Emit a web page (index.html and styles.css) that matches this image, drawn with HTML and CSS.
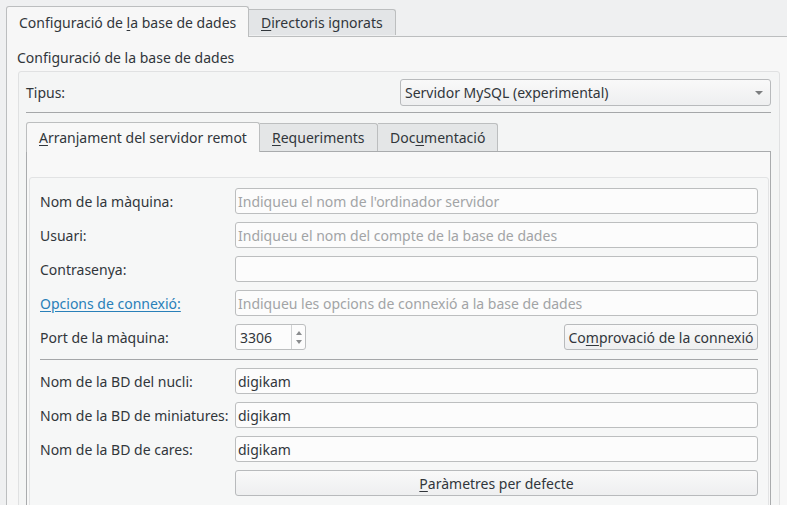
FILE: index.html
```html
<!DOCTYPE html>
<html lang="ca">
<head>
<meta charset="utf-8">
<title>Configuració de la base de dades</title>
<link rel="stylesheet" href="styles.css">
</head>
<body>
<div class="outer">
  <div class="tabbar">
    <div class="tab active"><span>Configuració de <u>l</u>a base de dades</span></div>
    <div class="tab inactive"><span><u>D</u>irectoris ignorats</span></div>
  </div>
  <div class="pane">
    <div class="title">Configuració de la base de dades</div>
    <div class="group">
      <div class="type-row">
        <span>Tipus:</span>
        <div class="combo">
          <span>Servidor MySQL (experimental)</span>
          <span class="arrow"></span>
        </div>
      </div>
      <div class="hline"></div>
      <div class="inner-tabbar">
        <div class="itab active"><span><u>A</u>rranjament del servidor remot</span></div>
        <div class="itab inactive"><span><u>R</u>equeriments</span></div>
        <div class="itab inactive"><span>Doc<u>u</u>mentació</span></div>
      </div>
      <div class="inner-pane">
        <div class="frame">
          <div class="form">
            <label>Nom de la màquina:</label>
            <div class="input placeholder">Indiqueu el nom de l'ordinador servidor</div>
            <label>Usuari:</label>
            <div class="input placeholder">Indiqueu el nom del compte de la base de dades</div>
            <label>Contrasenya:</label>
            <div class="input"></div>
            <label><a class="link">Opcions de connexió:</a></label>
            <div class="input placeholder">Indiqueu les opcions de connexió a la base de dades</div>
            <label>Port de la màquina:</label>
            <div class="port-row">
              <div class="spin">
                <span class="spin-val">3306</span>
                <span class="spin-btns"><span class="up"></span><span class="down"></span></span>
              </div>
              <div class="button test"><span>Co<u>m</u>provació de la connexió</span></div>
            </div>
            <div class="sep"></div>
            <label>Nom de la BD del nucli:</label>
            <div class="input">digikam</div>
            <label>Nom de la BD de miniatures:</label>
            <div class="input">digikam</div>
            <label>Nom de la BD de cares:</label>
            <div class="input">digikam</div>
            <span></span>
            <div class="button wide"><span><u>P</u>aràmetres per defecte</span></div>
          </div>
        </div>
      </div>
    </div>
  </div>
</div>
</body>
</html>
```
FILE: styles.css
```css
html, body {
  margin: 0;
  padding: 0;
}
body {
  width: 787px;
  height: 505px;
  overflow: hidden;
  background: #eff0f1;
  font-family: "Noto Sans", sans-serif;
  font-size: 14px;
  color: #31363b;
}
u { text-decoration: underline; text-underline-offset: 2px; }

.outer {
  padding: 6px 0 0 6px;
  width: 800px;
}
.tabbar {
  display: flex;
  align-items: flex-end;
  height: 30px;
}
.tab {
  box-sizing: border-box;
  border: 1px solid #bcbebf;
  border-bottom: none;
  border-radius: 3px 3px 0 0;
  display: flex;
  align-items: center;
  padding: 0 12px 0 12px;
  white-space: nowrap;
}
.tab.active {
  width: 243px;
  height: 31px;
  margin-bottom: -1px;
  background: #f7f7f7;
  position: relative;
  z-index: 1;
}
.tab.inactive {
  width: 147px;
  height: 26px;
  margin-bottom: 1px;
  background: #e3e5e7;
  border-left: none;
  border-radius: 0 3px 0 0;
}
.pane {
  border: 1px solid #bcbebf;
  background: #f7f7f7;
  padding: 12px 0 0 10px;
  height: 480px;
}
.title {
  line-height: 18px;
  height: 18px;
  margin-bottom: 4px;
}
.group {
  box-sizing: border-box;
  width: 762px;
  margin-left: 1px;
  border: 1px solid #e0e1e2;
  border-radius: 3px;
  background: #f4f5f5;
  padding: 7px 8px 0 7px;
  height: 460px;
}
.type-row {
  display: flex;
  justify-content: space-between;
  align-items: center;
  height: 27px;
}
.combo {
  box-sizing: border-box;
  width: 371px;
  height: 27px;
  border: 1px solid #b8babc;
  border-radius: 3px;
  background: linear-gradient(#f9f9f9, #eeeff0);
  display: flex;
  align-items: center;
  justify-content: space-between;
  padding: 0 7px 0 4px;
}
.arrow {
  width: 0;
  height: 0;
  border-left: 4px solid transparent;
  border-right: 4px solid transparent;
  border-top: 4px solid #7c7e80;
}
.hline {
  height: 1px;
  background: #a5a7a9;
  margin: 6px 0 8px;
}
.inner-tabbar {
  display: flex;
  align-items: flex-end;
  height: 30px;
}
.itab {
  box-sizing: border-box;
  border: 1px solid #bcbebf;
  border-bottom: none;
  border-radius: 3px 3px 0 0;
  display: flex;
  align-items: center;
  padding: 0 12px;
  white-space: nowrap;
}
.itab.active {
  width: 234px;
  height: 30px;
  margin-bottom: -1px;
  background: #f8f8f8;
  position: relative;
  z-index: 1;
}
.itab.inactive {
  height: 28px;
  background: #e4e6e7;
  border-left: none;
  border-radius: 0 3px 0 0;
}
.itab.inactive:nth-child(2) { width: 118px; }
.itab.inactive:nth-child(3) { width: 120px; }
.inner-pane {
  box-sizing: border-box;
  width: 745px;
  border: 1px solid #a9abad;
  background: #f8f8f8;
  padding: 25px 1px 0 2px;
  height: 400px;
}
.frame {
  box-sizing: border-box;
  border: 1px solid #e2e3e4;
  border-radius: 3px;
  background: #f6f7f7;
  padding: 10px 10px 0 10px;
  height: 380px;
}
.form {
  display: grid;
  grid-template-columns: 195px 1fr;
  grid-auto-rows: auto;
  row-gap: 8px;
  align-items: center;
}
label {
  white-space: nowrap;
}
.link {
  color: #2980b9;
  text-decoration: underline;
  text-underline-offset: 2px;
}
.input {
  box-sizing: border-box;
  height: 26px;
  border: 1px solid #bcbebf;
  border-radius: 3px;
  background: #fcfcfc;
  padding: 0 2px;
  display: flex;
  align-items: center;
  white-space: nowrap;
}
.input.placeholder {
  color: #a2a4a6;
}
.port-row {
  display: flex;
  justify-content: space-between;
  align-items: center;
  height: 26px;
}
.spin {
  box-sizing: border-box;
  width: 71px;
  height: 26px;
  border: 1px solid #bcbebf;
  border-radius: 3px;
  background: #fcfcfc;
  display: flex;
  align-items: stretch;
}
.spin-val {
  flex: 1;
  display: flex;
  align-items: center;
  padding-left: 4px;
}
.spin-btns {
  width: 13px;
  border-left: 1px solid #d0d2d3;
  display: flex;
  flex-direction: column;
  align-items: center;
  justify-content: center;
  gap: 5px;
}
.up {
  width: 0; height: 0;
  border-left: 3.5px solid transparent;
  border-right: 3.5px solid transparent;
  border-bottom: 4px solid #8a8c8e;
}
.down {
  width: 0; height: 0;
  border-left: 3.5px solid transparent;
  border-right: 3.5px solid transparent;
  border-top: 4px solid #8a8c8e;
}
.button {
  box-sizing: border-box;
  height: 26px;
  border: 1px solid #b8babc;
  border-radius: 3px;
  background: linear-gradient(#f9f9f9, #eeeff0);
  display: flex;
  align-items: center;
  justify-content: center;
  white-space: nowrap;
}
.button.test {
  width: 194px;
}
.sep {
  grid-column: 1 / 3;
  height: 1px;
  margin-top: 1px;
  background: #a5a7a9;
}
```
